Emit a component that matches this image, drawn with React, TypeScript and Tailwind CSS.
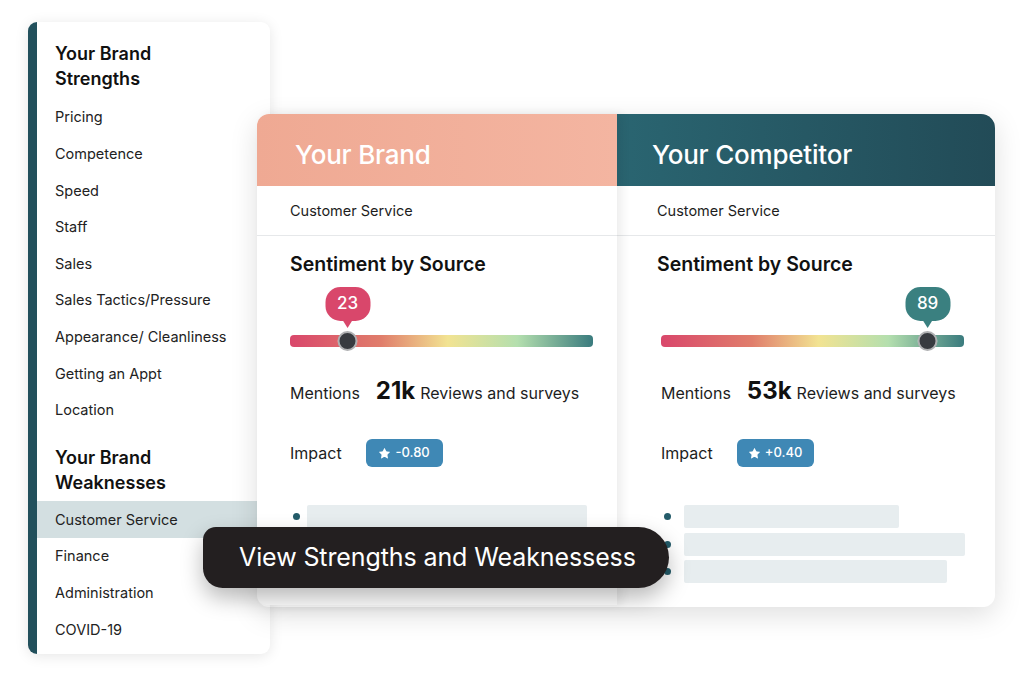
import { Star } from "lucide-react";

const strengths = [
  "Pricing",
  "Competence",
  "Speed",
  "Staff",
  "Sales",
  "Sales Tactics/Pressure",
  "Appearance/ Cleanliness",
  "Getting an Appt",
  "Location",
];

const weaknesses = ["Customer Service", "Finance", "Administration", "COVID-19"];

const Slider = ({ value, pct, color }: { value: number; pct: number; color: string }) => (
  <div className="relative h-[62px] w-[303px]">
    <div className="absolute left-0 right-0 bottom-0 h-[12px] rounded-[4px] bg-[linear-gradient(90deg,#d9476b_0%,#e07d6b_30%,#f2e392_52%,#b4dfae_75%,#3a7b7e_100%)]" />
    <div className="absolute bottom-[-4px] -translate-x-1/2 flex flex-col items-center" style={{ left: `${pct}%` }}>
      <div className={`h-[34px] w-[45px] rounded-[15px] flex items-center justify-center text-white text-[17px] font-medium ${color}`}>
        {value}
      </div>
      <div className={`w-[10px] h-[8px] -mt-px [clip-path:polygon(0_0,100%_0,50%_100%)] ${color}`} />
      <div className="w-[20px] h-[20px] mt-[3px] rounded-full bg-[#383b40] border-2 border-white/60" />
    </div>
  </div>
);

const Column = ({
  title,
  header,
  headPad,
  pad,
  value,
  pct,
  bubble,
  mentions,
  impact,
  bars,
  barGap,
  className,
}: {
  title: string;
  header: string;
  headPad: string;
  pad: string;
  value: number;
  pct: number;
  bubble: string;
  mentions: string;
  impact: string;
  bars: string[];
  barGap: string;
  className: string;
}) => (
  <div className={`flex flex-col bg-white overflow-hidden ${className}`}>
    <div className={`h-[72px] flex items-center pt-[8px] ${headPad} ${header}`}>
      <span className="text-white text-[26px] font-medium tracking-[-0.2px]">{title}</span>
    </div>
    <div className={`h-[50px] flex items-center border-b border-[#e6e8ea] ${pad}`}>
      <span className="text-[14.5px] text-[#1d1d1d]">Customer Service</span>
    </div>
    <div className={`flex flex-col ${pad}`}>
      <h3 className="mt-[16px] text-[19.5px] leading-[24px] font-semibold text-[#111]">Sentiment by Source</h3>
      <div className={pct > 50 ? "ml-[4px]" : ""}>
        <div className="mt-[9px]">
          <Slider value={value} pct={pct} color={bubble} />
        </div>
        <div className="mt-[26px] flex items-baseline text-[16px] text-[#1d1d1d]">
          <span>Mentions</span>
          <span className="ml-[16px] text-[24px] font-bold text-[#111]">{mentions}</span>
          <span className="ml-[5px]">Reviews and surveys</span>
        </div>
        <div className="mt-[30px] flex items-center text-[16px] text-[#1d1d1d]">
          <span>Impact</span>
          <span className="ml-[24px] h-[28px] w-[77px] rounded-[6px] bg-[#3f88b5] flex items-center justify-center gap-[4px] text-white text-[13px] font-medium">
            <Star size={13} fill="white" strokeWidth={0} />
            {impact}
          </span>
        </div>
        <div className="mt-[38px] flex flex-col gap-[4.5px]">
          {bars.map((w, i) => (
            <div key={i} className="flex items-center">
              <span className="w-[7px] h-[7px] rounded-full bg-[#245c6a] ml-[3px]" />
              <span className={`h-[23px] rounded-[2px] bg-[#e7edef] ${barGap} ${w}`} />
            </div>
          ))}
        </div>
      </div>
    </div>
  </div>
);

export default function App() {
  return (
    <div className="relative w-[1024px] h-[690px] overflow-hidden bg-white text-[#1d1d1d] font-['Inter',sans-serif]">
      <div className="flex items-start pl-[28px] pt-[22px]">
        <aside className="w-[242px] h-[632px] shrink-0 rounded-[9px] border-l-[9px] border-[#22505c] bg-white shadow-[0_2px_14px_rgba(0,0,0,0.10)] flex flex-col pt-[19px]">
          <h2 className="pl-[18px] text-[18px] leading-[25px] font-semibold text-[#111]">
            Your Brand
            <br />
            Strengths
          </h2>
          <ul className="mt-[8px]">
            {strengths.map((s) => (
              <li key={s} className="h-[36.6px] flex items-center pl-[18px] text-[14.5px] text-[#222]">
                {s}
              </li>
            ))}
          </ul>
          <h2 className="mt-[17px] pl-[18px] text-[18px] leading-[25px] font-semibold text-[#111]">
            Your Brand
            <br />
            Weaknesses
          </h2>
          <ul className="mt-[6px]">
            {weaknesses.map((s, i) => (
              <li
                key={s}
                className={`h-[36.6px] flex items-center pl-[18px] text-[14.5px] text-[#222] ${i === 0 ? "bg-[#d3dfe1]" : ""}`}
              >
                {s}
              </li>
            ))}
          </ul>
        </aside>

        <div className="-ml-[13px] mt-[92px] flex items-start rounded-[12px] shadow-[0_8px_28px_rgba(0,0,0,0.13)]">
          <Column
            title="Your Brand"
            header="bg-[linear-gradient(90deg,#efa993,#f4b5a1)]"
            headPad="pl-[38px]"
            pad="pl-[33px]"
            value={23}
            pct={19}
            bubble="bg-[#d9476b]"
            mentions="21k"
            impact="-0.80"
            bars={["w-[280px]"]}
            barGap="ml-[7px]"
            className="relative z-10 w-[360px] h-[491px] rounded-tl-[12px] rounded-bl-[10px] shadow-[5px_0_10px_rgba(0,0,0,0.07)]"
          />
          <Column
            title="Your Competitor"
            header="bg-[linear-gradient(90deg,#2a6571,#224b57)]"
            headPad="pl-[35px]"
            pad="pl-[40px]"
            value={89}
            pct={88}
            bubble="bg-[#3a8080]"
            mentions="53k"
            impact="+0.40"
            bars={["w-[215px]", "w-[281px]", "w-[263px]"]}
            barGap="ml-[13px]"
            className="w-[378px] h-[493px] rounded-tr-[14px] rounded-br-[14px]"
          />
        </div>
      </div>

      <div className="absolute left-[203px] top-[527px] z-20 h-[61px] w-[466px] flex items-center pl-[36px] bg-[#231f20] rounded-tl-[13px] rounded-bl-[20px] rounded-r-[31px] shadow-[0_10px_22px_rgba(0,0,0,0.28)]">
        <span className="text-white text-[25px] tracking-[-0.1px]">View Strengths and Weaknessess</span>
      </div>
    </div>
  );
}
